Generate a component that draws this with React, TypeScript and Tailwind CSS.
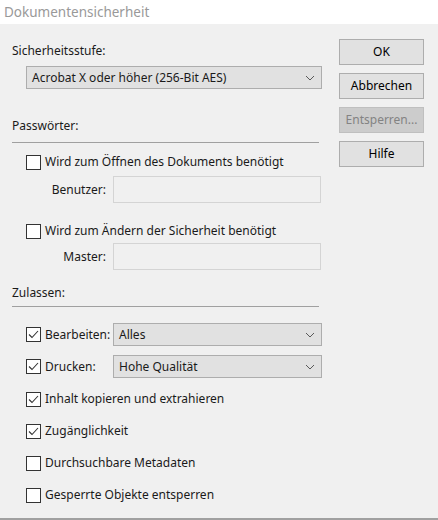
import React from "react";

const font = { fontFamily: '"Segoe UI", "Noto Sans", "Open Sans", sans-serif' };

const Chevron = () => (
  <svg width="10" height="6" viewBox="0 0 10 6" className="shrink-0">
    <path d="M1 1 L5 5 L9 1" fill="none" stroke="#5a5a5a" strokeWidth="1" />
  </svg>
);

const Checkbox = ({ checked }: { checked?: boolean }) => (
  <span className="w-[15px] h-[15px] border border-[#333333] bg-white flex items-center justify-center shrink-0">
    {checked && (
      <svg width="13" height="13" viewBox="0 0 13 13">
        <path d="M2 6.5 L5 9.5 L11 3" fill="none" stroke="#333333" strokeWidth="1.1" />
      </svg>
    )}
  </span>
);

const Select = ({ value, className }: { value: string; className: string }) => (
  <div
    className={`h-[23px] bg-[#e1e1e1] border border-[#adadad] flex items-center justify-between pl-[5px] pr-[6px] ${className}`}
  >
    <span>{value}</span>
    <Chevron />
  </div>
);

const Button = ({ label, disabled }: { label: string; disabled?: boolean }) => (
  <div
    className={`h-[26px] border flex items-center justify-center ${
      disabled ? "bg-[#cccccc] border-[#bfbfbf] text-[#838383]" : "bg-[#e1e1e1] border-[#adadad] text-black"
    }`}
  >
    {label}
  </div>
);

const CheckRow = ({ label, checked }: { label: string; checked?: boolean }) => (
  <div className="h-[32px] flex items-center gap-[4px] pl-[14px]">
    <Checkbox checked={checked} />
    <span>{label}</span>
  </div>
);

export default function App() {
  return (
    <div className="w-[438px] h-[520px] bg-[#f0f0f0] text-[12px] text-[#1a1a1a] flex flex-col" style={font}>
      <div className="h-[24px] bg-white pl-[4px] flex items-center text-[13.5px] text-[#999999]">
        Dokumentensicherheit
      </div>
      <div className="flex-1 flex border-b-[2px] border-[#a0a0a0]">
        <div className="w-[322px] pl-[12px] pt-[19px] flex flex-col">
          <div className="h-[16px] leading-[16px]">Sicherheitsstufe:</div>
          <Select value="Acrobat X oder höher (256-Bit AES)" className="mt-[7px] ml-[14px] w-[296px]" />

          <div className="mt-[29px] h-[16px] leading-[16px]">Passwörter:</div>
          <div className="mt-[8px] h-px w-[307px] bg-[#a0a0a0]" />

          <div className="mt-[8px] h-[22px] flex items-center gap-[4px] pl-[14px]">
            <Checkbox />
            <span>Wird zum Öffnen des Dokuments benötigt</span>
          </div>
          <div className="mt-[3px] flex items-center">
            <span className="w-[101px] text-right pr-[7px]">Benutzer:</span>
            <div className="h-[27px] w-[208px] border border-[#d4d4d4] bg-[#f0f0f0]" />
          </div>

          <div className="mt-[17px] h-[22px] flex items-center gap-[4px] pl-[14px]">
            <Checkbox />
            <span>Wird zum Ändern der Sicherheit benötigt</span>
          </div>
          <div className="mt-[1px] flex items-center">
            <span className="w-[101px] text-right pr-[7px]">Master:</span>
            <div className="h-[27px] w-[208px] border border-[#d4d4d4] bg-[#f0f0f0]" />
          </div>

          <div className="mt-[15px] h-[16px] leading-[16px]">Zulassen:</div>
          <div className="mt-[5px] h-px w-[307px] bg-[#a0a0a0]" />

          <div className="mt-[16px] flex items-center pl-[14px]">
            <Checkbox checked />
            <span className="ml-[4px] w-[68px]">Bearbeiten:</span>
            <Select value="Alles" className="w-[209px]" />
          </div>
          <div className="mt-[9px] flex items-center pl-[14px]">
            <Checkbox checked />
            <span className="ml-[4px] w-[68px]">Drucken:</span>
            <Select value="Hohe Qualität" className="w-[209px]" />
          </div>

          <div className="mt-[5px] flex flex-col">
            <CheckRow label="Inhalt kopieren und extrahieren" checked />
            <CheckRow label="Zugänglichkeit" checked />
            <CheckRow label="Durchsuchbare Metadaten" />
            <CheckRow label="Gesperrte Objekte entsperren" />
          </div>
        </div>
        <div className="ml-[17px] w-[85px] pt-[15px] flex flex-col gap-[8px]">
          <Button label="OK" />
          <Button label="Abbrechen" />
          <Button label="Entsperren..." disabled />
          <Button label="Hilfe" />
        </div>
      </div>
    </div>
  );
}
